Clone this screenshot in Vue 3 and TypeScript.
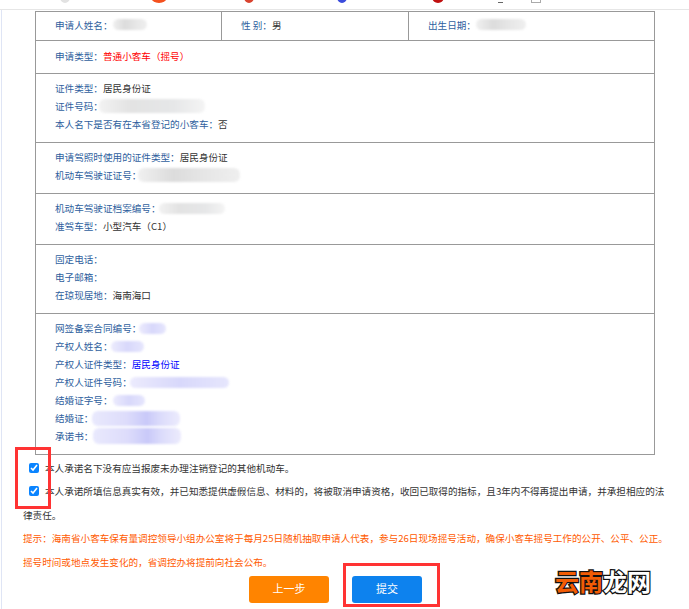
<template>
  <div class="page">
    <div class="topbar">
      <i class="frag gray"></i>
      <i class="frag orange"></i>
      <i class="frag red"></i>
      <i class="frag blue"></i>
      <i class="frag darkred"></i>
      <i class="frag dark"></i>
      <i class="frag box"></i>
    </div>

    <div class="sheet">
      <div class="row">
        <div class="cell" v-for="c in topCells" :key="c.label">
          <span class="lab">{{ c.label }}</span><span v-if="c.value" class="val">{{ c.value }}</span>
          <span v-if="c.blur" class="blur gray-blur" :style="{ width: c.blur + 'px' }"></span>
        </div>
      </div>

      <div v-for="(sec, i) in sections" :key="i" class="section" :class="sec.cls">
        <div v-for="line in sec.lines" :key="line.label" class="line">
          <span class="lab">{{ line.label }}</span><span v-if="line.value" class="val" :class="line.tone">{{ line.value }}</span>
          <span
            v-if="line.blur"
            class="blur"
            :class="line.kind || 'gray-blur'"
            :style="{ width: line.blur + 'px', height: (line.h || 11) + 'px', marginLeft: (line.gap || 0) + 'px' }"
          ></span>
        </div>
      </div>
    </div>

    <div class="notes">
      <label class="check"><input type="checkbox" checked />本人承诺名下没有应当报废未办理注销登记的其他机动车。</label>
      <label class="check"><input type="checkbox" checked />本人承诺所填信息真实有效，并已知悉提供虚假信息、材料的，将被取消申请资格，收回已取得的指标，且3年内不得再提出申请，并承担相应的法律责任。</label>
      <p class="tip">提示：海南省小客车保有量调控领导小组办公室将于每月25日随机抽取申请人代表，参与26日现场摇号活动，确保小客车摇号工作的公开、公平、公正。</p>
      <p class="tip">摇号时间或地点发生变化的，省调控办将提前向社会公布。</p>
    </div>

    <div class="actions">
      <button class="btn prev">上一步</button>
      <button class="btn submit">提交</button>
    </div>

    <div class="mark mark-a"></div>
    <div class="mark mark-b"></div>
    <div class="logo"><span class="hot">云南</span><span class="cold">龙网</span></div>
  </div>
</template>

<script setup lang="ts">
interface Line {
  label: string
  value?: string
  tone?: string
  blur?: number
  gap?: number
  h?: number
  kind?: string
}

const topCells = [
  { label: '申请人姓名：', blur: 34 },
  { label: '性 别：', value: '男' },
  { label: '出生日期：', blur: 50 },
]

const sections: { cls: string; lines: Line[] }[] = [
  { cls: 'h33', lines: [{ label: '申请类型：', value: '普通小客车（摇号）', tone: 'danger' }] },
  {
    cls: 'h69',
    lines: [
      { label: '证件类型：', value: '居民身份证' },
      { label: '证件号码：', blur: 106, gap: -4, h: 14, kind: 'pale-blur' },
      { label: '本人名下是否有在本省登记的小客车：', value: '否' },
    ],
  },
  {
    cls: 'h51',
    lines: [
      { label: '申请驾照时使用的证件类型：', value: '居民身份证' },
      { label: '机动车驾驶证证号：', blur: 102, gap: -3, h: 14 },
    ],
  },
  {
    cls: 'h51',
    lines: [
      { label: '机动车驾驶证档案编号：', blur: 66, gap: -2, kind: 'pale-blur' },
      { label: '准驾车型：', value: '小型汽车（C1）' },
    ],
  },
  {
    cls: 'h69',
    lines: [
      { label: '固定电话：' },
      { label: '电子邮箱：' },
      { label: '在琼现居地：', value: '海南海口' },
    ],
  },
  {
    cls: 'last',
    lines: [
      { label: '网签备案合同编号：', blur: 27, gap: -2, kind: 'violet-blur' },
      { label: '产权人姓名：', blur: 33, gap: -2, kind: 'violet-blur' },
      { label: '产权人证件类型：', value: '居民身份证', tone: 'link' },
      { label: '产权人证件号码：', blur: 99, gap: -2, kind: 'violet-blur' },
      { label: '结婚证字号：', blur: 32, kind: 'violet-blur' },
      { label: '结婚证：', blur: 88, gap: -1, h: 15, kind: 'deep-blur' },
      { label: '承诺书：', blur: 88, h: 16, kind: 'deep-blur' },
    ],
  },
]
</script>

<style scoped>
.page {
  position: relative;
  width: 689px;
  height: 609px;
  overflow: hidden;
  background: #fff;
  font-family: "Noto Sans CJK SC", "Liberation Sans", sans-serif;
  font-size: 9.6px;
  color: #333;
}
.page::before {
  content: "";
  position: absolute;
  left: 1px;
  top: 10px;
  bottom: 0;
  width: 1px;
  background: #dfe5f5;
}
.topbar {
  display: flex;
  height: 10px;
  border-bottom: 1px solid #e6e6e6;
  box-sizing: border-box;
  overflow: hidden;
}
.frag {
  display: block;
  flex: none;
  width: 10px;
  height: 12px;
  margin-top: -9px;
  border-radius: 50%;
}
.gray { background: #e2e2e2; margin-left: 60px; }
.orange { background: #f4511e; width: 16px; margin-left: 81px; }
.red { background: #d9432f; margin-left: 77px; }
.blue { background: #3b4cdc; margin-left: 83px; }
.darkred { background: #c01010; width: 12px; margin-left: 85px; }
.dark {
  background: #666;
  width: 5px;
  height: 1px;
  margin: 2px 0 0 54px;
  border-radius: 0;
}
.box {
  background: #fff;
  border: 1px solid #aaa;
  box-sizing: border-box;
  margin-left: 28px;
  border-radius: 0;
}

.sheet {
  width: 620px;
  margin: 1px 0 0 35px;
  border: 1px solid #999;
  box-sizing: border-box;
}
.row {
  display: grid;
  grid-template-columns: 186px 187px 1fr;
  height: 29px;
  border-bottom: 1px solid #999;
  box-sizing: border-box;
}
.cell {
  display: flex;
  align-items: center;
  padding: 0 0 3px 19px;
  border-right: 1px solid #999;
}
.cell:last-child {
  border-right: none;
}
.section {
  display: flex;
  flex-direction: column;
  justify-content: center;
  padding: 0 0 4px 19px;
  border-bottom: 1px solid #999;
  box-sizing: border-box;
}
.section:last-child {
  border-bottom: none;
}
.h33 { height: 33px; padding-bottom: 3px; }
.h69 { height: 69px; }
.h51 { height: 51px; }
.last { height: 140px; }
.line {
  display: flex;
  align-items: center;
  height: 18px;
  white-space: nowrap;
}
.lab { color: #2f5f9e; }
.val { color: #333; }
.danger { color: #f00; }
.link { color: #00f; }
.blur {
  display: block;
  height: 11px;
  border-radius: 6px;
  filter: blur(1px);
}
.gray-blur {
  background: linear-gradient(90deg, #f0f0f0, #dcdcdc 35%, #e6e6e6 65%, #efefef);
}
.pale-blur {
  background: linear-gradient(90deg, #f2f2f2, #e3e3e3 30%, #e6e7e8 70%, #f4f4f4);
}
.violet-blur {
  background: linear-gradient(90deg, #ecebfd, #d8d8fb 50%, #e6e6fd);
}
.deep-blur {
  background: linear-gradient(90deg, #e9e9fd, #dddcfb 40%, #c9c9f9 62%, #dcdcfb 78%, #ecebfd);
}

.notes {
  margin: 1.5px 0 0 23px;
  width: 645px;
  line-height: 23.6px;
}
.check {
  display: block;
  color: #333;
}
.check input {
  width: 10px;
  height: 10px;
  margin: 0 6px;
  vertical-align: -1px;
  accent-color: #0a84ff;
}
.tip {
  margin: 0;
  color: #ff5a00;
}

.actions {
  display: flex;
  gap: 23px;
  margin: 1.5px 0 0 249px;
}
.btn {
  height: 27px;
  border: none;
  border-radius: 3px;
  color: #fff;
  font-family: inherit;
  font-size: 11px;
  padding: 0 0 2px;
}
.prev { width: 80px; background: #ff8400; }
.submit { width: 70px; background: #0d82ee; }

.mark {
  position: absolute;
  border: 3px solid #f33;
  box-sizing: border-box;
}
.mark-a { left: 15px; top: 447px; width: 36px; height: 62px; }
.mark-b { left: 343px; top: 563px; width: 97px; height: 44px; }
.logo {
  position: absolute;
  left: 555px;
  top: 564px;
  font-size: 24px;
  line-height: 34px;
  font-weight: 700;
  white-space: nowrap;
  -webkit-text-stroke: 2.5px #111;
  paint-order: stroke fill;
}
.hot { color: #f25c05; }
.cold { color: #fff; }
</style>

<style>
html, body { margin: 0; background: #fff; }
</style>
